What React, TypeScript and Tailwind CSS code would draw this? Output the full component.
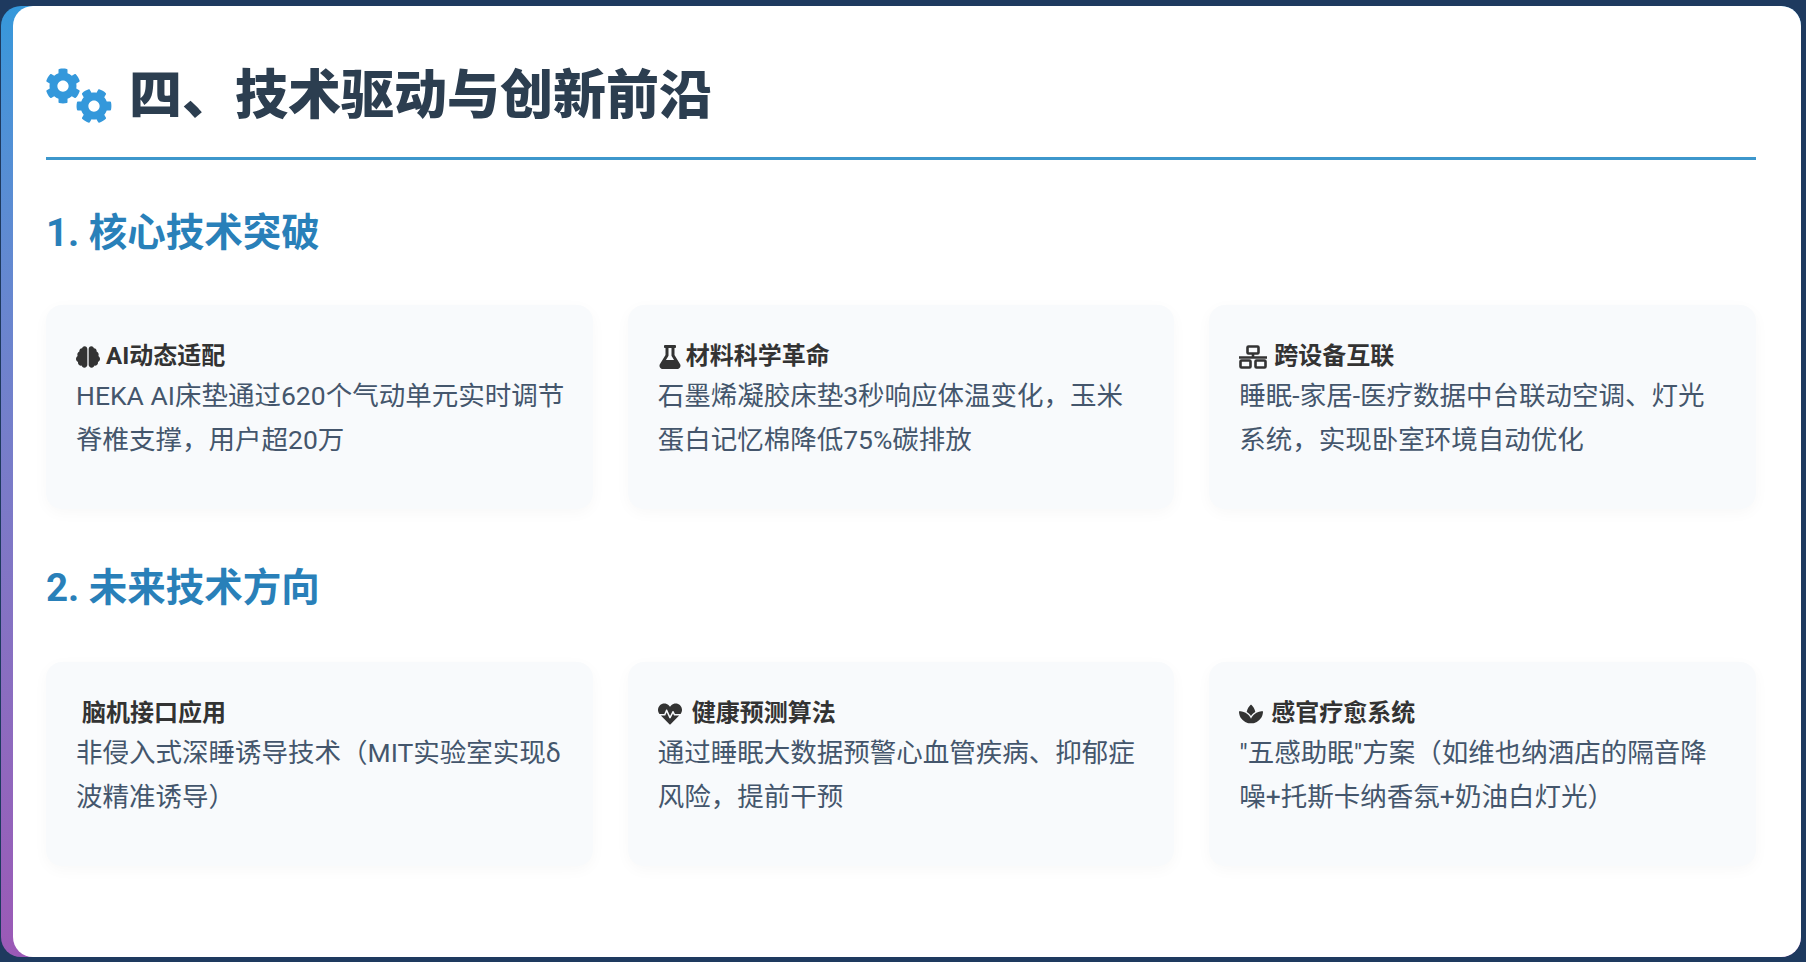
import { FaCog, FaBrain, FaFlask, FaHeartbeat, FaSpa } from "react-icons/fa";
import type { ReactNode } from "react";

interface Item {
    icon?: ReactNode,
    title: string,
    text: string,
}

// three linked boxes, outlined
const Network = () => (
    <svg className="mr-[1px]" width="28" height="24" viewBox="0 0 28 24" fill="none" stroke="currentColor" strokeWidth="2.6">
        <rect x="8.5" y="1.5" width="11" height="7" rx="1" />
        <path d="M14 8.5V12.5M0 12.5H28" />
        <rect x="1.5" y="15.5" width="10" height="7" rx="1" />
        <rect x="16.5" y="15.5" width="10" height="7" rx="1" />
    </svg>
);

const core: Item[] = [
    { icon: <FaBrain />, title: "AI动态适配", text: "HEKA AI床垫通过620个气动单元实时调节脊椎支撑，用户超20万" },
    { icon: <FaFlask className="-mr-[2px]" />, title: "材料科学革命", text: "石墨烯凝胶床垫3秒响应体温变化，玉米蛋白记忆棉降低75%碳排放" },
    { icon: <Network />, title: "跨设备互联", text: "睡眠-家居-医疗数据中台联动空调、灯光系统，实现卧室环境自动优化" },
];

const future: Item[] = [
    { title: "脑机接口应用", text: "非侵入式深睡诱导技术（MIT实验室实现δ波精准诱导）" },
    { icon: <FaHeartbeat className="mr-[4px]" />, title: "健康预测算法", text: "通过睡眠大数据预警心血管疾病、抑郁症风险，提前干预" },
    { icon: <FaSpa className="mr-[2px]" />, title: "感官疗愈系统", text: "\"五感助眠\"方案（如维也纳酒店的隔音降噪+托斯卡纳香氛+奶油白灯光）" },
];

const Card = ({ item }: { item: Item }) => (
    <div className="h-[204px] rounded-[16px] bg-[#f8fafc] pt-[34px] pr-[27px] pl-[30px] shadow-[0_4px_15px_rgba(0,0,0,0.03)]">
        <div className="flex h-[35px] items-center gap-[6px] text-[24px] leading-[35px] font-bold text-[#333333]">
            {item.icon ? <span className="text-[24px]">{item.icon}</span> : <span className="w-[0px]" />}
            <span>{item.title}</span>
        </div>
        <p className="text-[26.5px] leading-[44px] text-[#44566c]">{item.text}</p>
    </div>
);

const App = () => {
    return (
        <div
            className="h-screen bg-[#1e3a5f] pt-[6px] pr-[5px] pb-[5px] pl-[1px]"
            style={{ fontFamily: 'Roboto, "Noto Sans CJK SC", sans-serif' }}
        >
            <div className="h-full rounded-[20px] bg-gradient-to-b from-[#3498db] to-[#9b59b6] pl-[12px]">
                <div className="h-full rounded-[20px] bg-white pt-[52px] pr-[45px] pl-[33px]">
                    <div className="flex h-[102px] items-start gap-[18px] border-b-[3px] border-[#3d97cc]">
                        <div className="relative mt-[10px] h-[52px] w-[65px] text-[#3498db]">
                            <FaCog className="absolute top-0 -left-[1px] text-[36px]" />
                            <FaCog className="absolute top-[20px] left-[30px] rotate-90 text-[36px]" />
                        </div>
                        <h1 className="text-[53px] leading-[76px] font-black text-[#2c3e50]">四、技术驱动与创新前沿</h1>
                    </div>
                    <h2 className="mt-[48px] text-[38.5px] leading-[50px] font-bold text-[#2980b9]">1. 核心技术突破</h2>
                    <div className="mt-[47px] grid grid-cols-3 gap-[35px]">
                        {core.map((item) => <Card key={item.title} item={item} />)}
                    </div>
                    <h2 className="mt-[54px] text-[38.5px] leading-[50px] font-bold text-[#2980b9]">2. 未来技术方向</h2>
                    <div className="mt-[49px] grid grid-cols-3 gap-[35px]">
                        {future.map((item) => <Card key={item.title} item={item} />)}
                    </div>
                </div>
            </div>
        </div>
    );
}

export default App;
